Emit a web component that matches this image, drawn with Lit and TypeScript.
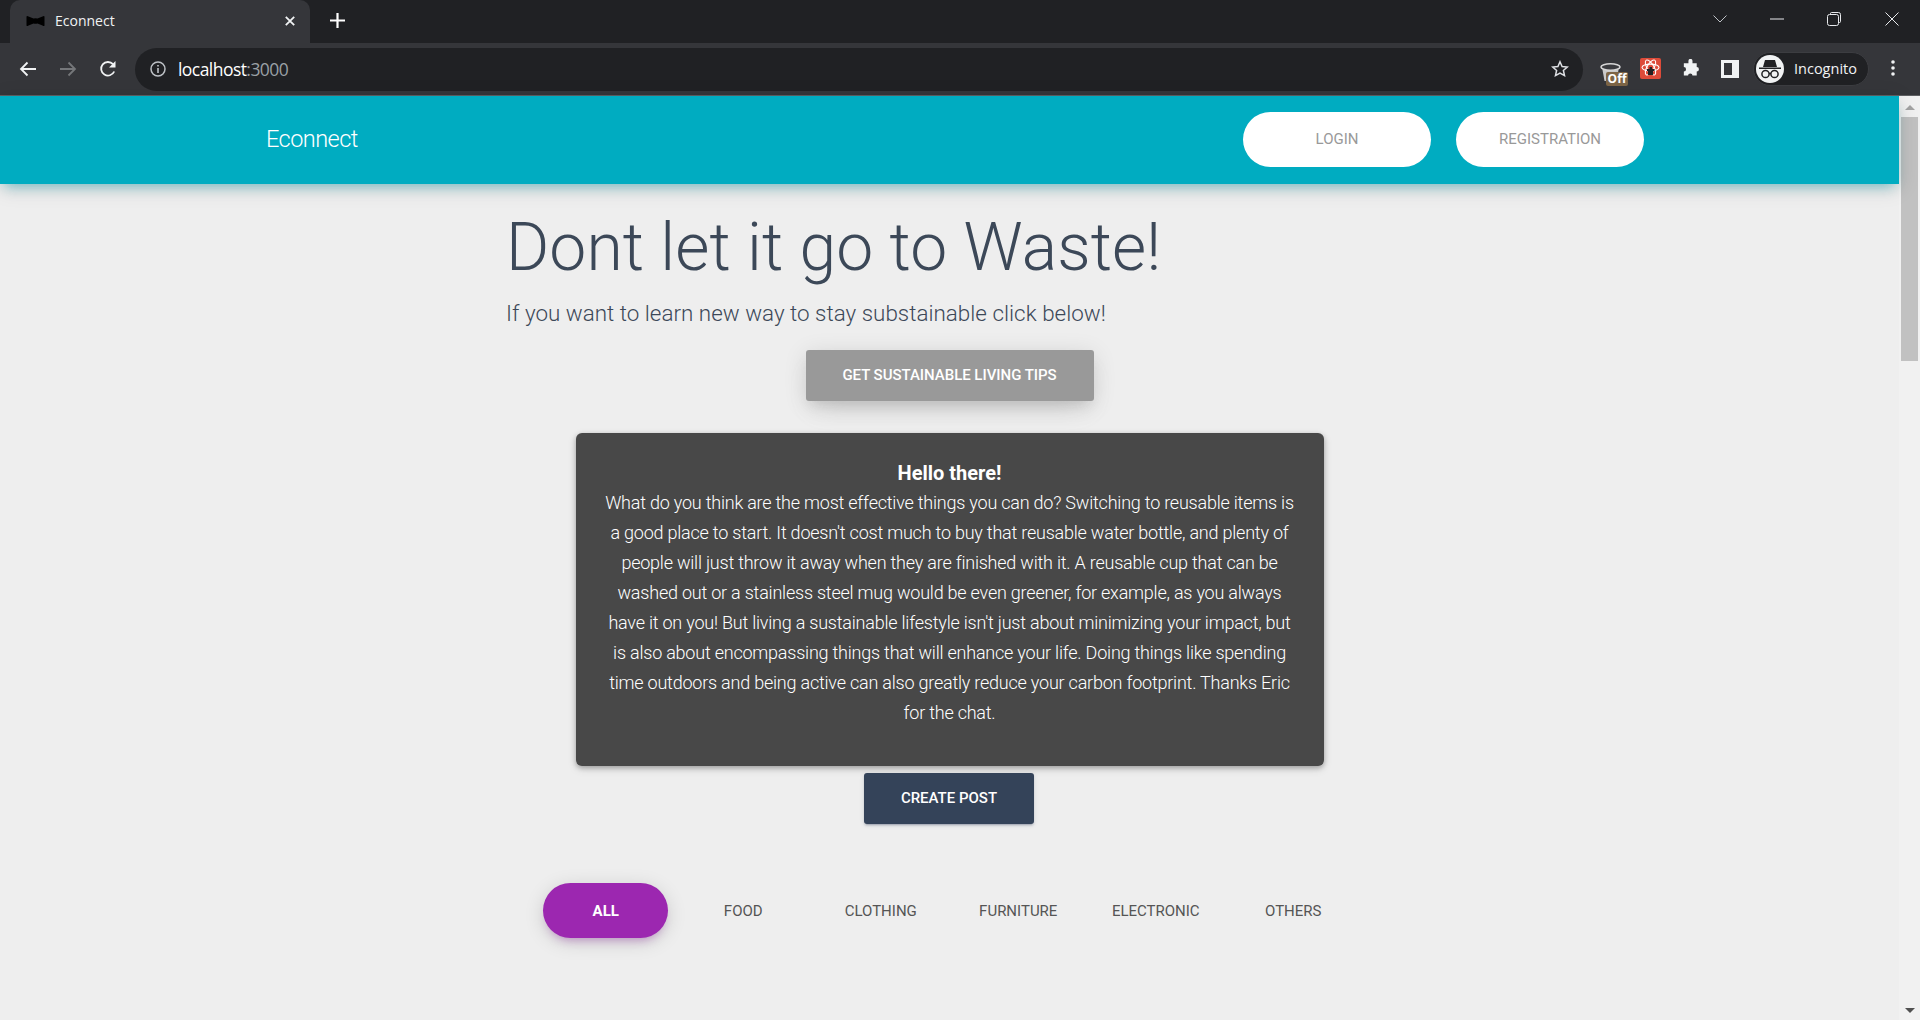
import { LitElement, html, css, svg } from "lit";
import { customElement } from "lit/decorators.js";

const CATS = ["ALL", "FOOD", "CLOTHING", "FURNITURE", "ELECTRONIC", "OTHERS"];

@customElement("app-root")
export class AppRoot extends LitElement {
  static styles = css`
    :host { display: flex; flex-direction: column; width: 1920px; height: 1020px; overflow: hidden; background: #eeeeee; font-family: Roboto, "Liberation Sans", sans-serif; }
    * { box-sizing: border-box; }
    svg { display: block; flex: none; }

    .tabstrip { height: 43px; background: #202124; display: flex; align-items: flex-start; flex: none; }
    .tab { width: 300px; height: 43px; margin: 0 0 0 10px; background: #35363a; border-radius: 10px 10px 0 0; display: flex; align-items: center; padding: 0 15px 2px 16px; color: #f1f3f4; font: 400 14px "Open Sans", Roboto, sans-serif; }
    .tab .title { margin-left: 10px; flex: 1; }
    .newtab { margin: 13px 0 0 20px; }
    .winctl { margin-left: auto; display: flex; align-items: center; height: 37px; gap: 43px; padding-right: 21px; }
    .winctl .last { margin-left: 1px; }

    .toolbar { height: 53px; background: #35363a; border-bottom: 1px solid #5f6063; display: flex; align-items: center; padding: 0 0 0 19px; flex: none; }
    .nav { display: flex; gap: 22px; align-items: center; }
    .omni { margin-left: 18px; width: 1448px; height: 43px; background: #202124; border-radius: 22px; display: flex; align-items: center; padding: 0 14px 0 15px; }
    .url { margin-left: 12px; font: 400 17.5px "Open Sans", Roboto, sans-serif; letter-spacing: -0.55px; color: #fff; }
    .url span { color: #9aa0a6; }
    .star { margin-left: auto; }
    .exts { display: flex; align-items: center; margin-left: 17px; }
    .badge { position: relative; width: 28px; height: 24px; margin-top: 10px; margin-right: 12px; }
    .off { position: absolute; right: 0; bottom: 0; width: 22px; height: 14px; background: #7d6546; color: #fff; font: 700 12px/14px "Open Sans", sans-serif; text-align: center; border-radius: 2px; }
    .it { margin-right: 20px; margin-top: -2px; }
    .puzzle { margin-right: 21px; margin-top: -2px; }
    .sidebar { margin-right: 14px; margin-top: -1px; }
    .inc { display: flex; align-items: center; width: 116px; height: 34px; background: #202124; border: 1px solid #3c3d41; border-radius: 17px; padding-left: 2px; color: #f1f3f4; font: 400 14.5px "Open Sans", sans-serif; margin-top: -1px; }
    .inc .avatar { width: 28px; height: 28px; border-radius: 50%; background: #f1f3f4; display: flex; align-items: center; justify-content: center; margin-right: 10px; }
    .inc .label { margin-top: -1px; }
    .dots { margin-left: 22px; margin-top: -2px; }

    .viewport { flex: 1; display: flex; min-height: 0; }
    .page { flex: 1; min-width: 0; display: flex; flex-direction: column; align-items: stretch; background: #eeeeee; }
    .scrollbar { width: 21px; flex: none; background: #f1f1f1; display: flex; flex-direction: column; align-items: center; }
    .up { margin: 9px 0 7px; width: 0; height: 0; border: 5px solid transparent; border-top: 0; border-bottom: 5px solid #a3a3a3; }
    .thumb { width: 17px; height: 244px; background: #c1c1c1; }
    .down { margin-top: auto; margin-bottom: 7px; width: 0; height: 0; border: 5px solid transparent; border-bottom: 0; border-top: 5px solid #505050; }

    header { height: 88px; background: #00acc1; box-shadow: 0 4px 20px 0 rgba(0,0,0,.14), 0 7px 12px -5px rgba(0,172,193,.46); display: flex; align-items: center; padding: 0 255px 1px 266px; flex: none; position: relative; }
    .brand { color: #fff; font-size: 23.5px; font-weight: 300; letter-spacing: -0.55px; padding-bottom: 2px; }
    .auth { margin-left: auto; display: flex; gap: 25px; }
    .pillbtn { width: 188px; height: 55px; border-radius: 30px; background: #fff; color: #999; display: flex; align-items: center; justify-content: center; padding-bottom: 2px; font-size: 15px; font-weight: 400; }

    main { width: 885px; align-self: center; display: flex; flex-direction: column; padding-top: 29px; }
    h1 { margin: 0 0 0 -1px; font-size: 66px; font-weight: 300; line-height: 70px; color: #3c4858; letter-spacing: 0.1px; }
    h4 { margin: 12px 0 0 -1px; font-size: 22.4px; font-weight: 300; line-height: 36px; color: #3c4858; letter-spacing: 0.02px; }
    .tips { align-self: center; margin-top: 19px; width: 288px; height: 51px; padding-bottom: 2px; background: #999; border-radius: 3px; color: #fff; font-size: 15px; font-weight: 500; letter-spacing: -0.03px; display: flex; align-items: center; justify-content: center; box-shadow: 0 14px 26px -12px rgba(153,153,153,.42), 0 4px 23px 0 rgba(0,0,0,.12), 0 8px 10px -5px rgba(153,153,153,.2); }
    .card { align-self: center; margin-top: 32px; width: 748px; height: 333px; background: #484848; border-radius: 6px; color: #fff; text-align: center; padding: 26px 26px 0; font-size: 18px; font-weight: 300; line-height: 30px; letter-spacing: -0.22px; box-shadow: 0 2px 5px 0 rgba(0,0,0,.26), 0 3px 10px 0 rgba(0,0,0,.12); }
    .card b { display: block; font-weight: 700; font-size: 20px; line-height: 29px; letter-spacing: 0; }
    .create { align-self: center; margin: 7px 1px 0 0; width: 170px; height: 51px; padding-bottom: 2px; background: #344359; border-radius: 3px; color: #fff; font-size: 15px; font-weight: 500; display: flex; align-items: center; justify-content: center; box-shadow: 0 2px 2px 0 rgba(52,67,89,.14), 0 3px 1px -2px rgba(52,67,89,.2), 0 1px 5px 0 rgba(52,67,89,.12); }
    .cats { align-self: center; margin-top: 59px; display: flex; gap: 12.5px; }
    .cat { width: 125px; height: 55px; border-radius: 30px; display: flex; align-items: center; justify-content: center; color: #555; font-size: 15px; font-weight: 400; }
    .cat.on { background: #9c27b0; color: #fff; font-weight: 700; box-shadow: 0 4px 20px 0 rgba(0,0,0,.14), 0 7px 10px -5px rgba(156,39,176,.4); }
  `;

  private icon(w: number, h: number, body: unknown, extra = "") {
    return html`<svg width=${w} height=${h} viewBox="0 0 ${w} ${h}" class=${extra}>${body}</svg>`;
  }

  render() {
    return html`
      <div class="tabstrip">
        <div class="tab">
          ${this.icon(19, 12, svg`<path d="M.5 1.5 Q1 .5 2.5 1.5 L7.5 3.5 Q9.5 3 11.5 3.5 L16.5 1.5 Q18 .5 18.5 1.5 V10.5 Q18 11.5 16.5 10.5 L11.5 8.5 Q9.5 9 7.5 8.5 L2.5 10.5 Q1 11.5 .5 10.5 Z" fill="#000"/>`)}
          <span class="title">Econnect</span>
          ${this.icon(10, 10, svg`<path d="M.8 .8 L9.2 9.2 M9.2 .8 L.8 9.2" stroke="#f1f3f4" stroke-width="1.8"/>`)}
        </div>
        ${this.icon(15, 15, svg`<path d="M7.5 0 V15 M0 7.5 H15" stroke="#fff" stroke-width="2.2"/>`, "newtab")}
        <div class="winctl">
          ${this.icon(14, 8, svg`<path d="M.5 .5 L7 7 L13.5 .5" fill="none" stroke="#bdc1c6" stroke-width="1"/>`)}
          ${this.icon(14, 2, svg`<path d="M0 1 H14" stroke="#e8eaed" stroke-width="1"/>`)}
          ${this.icon(14, 14, svg`<path d="M3.5 2 V1.5 Q3.5 .5 4.5 .5 H11.5 Q13.5 .5 13.5 2.5 V9.5 Q13.5 10.5 12.5 10.5 H12" fill="none" stroke="#e8eaed"/><rect x=".5" y="2.5" width="11" height="11" rx="2" fill="none" stroke="#e8eaed"/>`)}
          ${this.icon(14, 14, svg`<path d="M.5 .5 L13.5 13.5 M13.5 .5 L.5 13.5" stroke="#e8eaed" stroke-width="1"/>`, "last")}
        </div>
      </div>
      <div class="toolbar">
        <div class="nav">
          ${this.icon(18, 16, svg`<path d="M17 8 H2 M8.5 1.5 L2 8 L8.5 14.5" fill="none" stroke="#f1f3f4" stroke-width="1.8"/>`)}
          ${this.icon(18, 16, svg`<path d="M1 8 H16 M9.5 1.5 L16 8 L9.5 14.5" fill="none" stroke="#75777a" stroke-width="1.8"/>`)}
          ${this.icon(18, 18, svg`<path d="M15.2 11.5 A6.8 6.8 0 1 1 14 4.2" fill="none" stroke="#f1f3f4" stroke-width="1.8"/><path d="M16.5 1 V7.5 H10 Z" fill="#f1f3f4"/>`)}
        </div>
        <div class="omni">
          ${this.icon(16, 16, svg`<circle cx="8" cy="8" r="7" fill="none" stroke="#bdc1c6" stroke-width="1.5"/><path d="M8 7 V12 M8 4 V5.6" stroke="#bdc1c6" stroke-width="1.6"/>`)}
          <span class="url">localhost<span>:3000</span></span>
          ${this.icon(18, 18, svg`<path d="M9 1.8 L11.1 6.6 L16.3 7.1 L12.4 10.5 L13.5 15.6 L9 13 L4.5 15.6 L5.6 10.5 L1.7 7.1 L6.9 6.6 Z" fill="none" stroke="#dfe1e5" stroke-width="1.5"/>`, "star")}
        </div>
        <div class="exts">
          <div class="badge">
            ${this.icon(22, 22, svg`<path d="M2 5 L4.5 19 H16.5 L19 5 Z" fill="#c9c9c9"/><ellipse cx="10.5" cy="5" rx="9.5" ry="3.2" fill="#3a3b3f" stroke="#d6d6d6" stroke-width="1.6"/>`)}
            <span class="off">Off</span>
          </div>
          ${this.icon(21, 21, svg`<rect width="21" height="21" rx="2" fill="#dd4b39"/><g fill="none" stroke="#fff" stroke-width="1.1"><ellipse cx="10.5" cy="9.5" rx="8.5" ry="3.4"/><ellipse cx="10.5" cy="9.5" rx="8.5" ry="3.4" transform="rotate(60 10.5 9.5)"/><ellipse cx="10.5" cy="9.5" rx="8.5" ry="3.4" transform="rotate(120 10.5 9.5)"/></g><path d="M9.5 9 H12 V11 H14.5 V13 H13 V17 H8 V13 H7 V11 H9.5 Z" fill="#202124"/>`, "it")}
          ${this.icon(19, 19, svg`<path d="M7 1.5 a2.2 2.2 0 0 1 4.4 0 V4 H16 V8.2 a2.4 2.4 0 0 1 0 4.8 V17.5 H11.4 a2.4 2.4 0 0 0 -4.8 0 H2 V13 a2.4 2.4 0 0 0 0 -4.8 V4 H7 Z" fill="#f1f3f4" transform="translate(1 .5) scale(.92)"/>`, "puzzle")}
          ${this.icon(18, 18, svg`<path d="M0 0 H18 V18 H0 Z M3 3 V15 H11 V3 Z" fill="#f1f3f4" fill-rule="evenodd"/>`, "sidebar")}
          <div class="inc">
            <span class="avatar">
              ${this.icon(24, 22, svg`<path d="M7 2 H17 L19 9 H5 Z M1 9.5 H23 V11 H1 Z" fill="#202124"/><circle cx="7.5" cy="16" r="3.6" fill="none" stroke="#202124" stroke-width="1.5"/><circle cx="16.5" cy="16" r="3.6" fill="none" stroke="#202124" stroke-width="1.5"/><path d="M11 15.5 H13" stroke="#202124" stroke-width="1.5"/>`)}
            </span>
            <span class="label">Incognito</span>
          </div>
          ${this.icon(4, 16, svg`<circle cx="2" cy="2" r="1.8" fill="#f1f3f4"/><circle cx="2" cy="8" r="1.8" fill="#f1f3f4"/><circle cx="2" cy="14" r="1.8" fill="#f1f3f4"/>`, "dots")}
        </div>
      </div>
      <div class="viewport">
        <div class="page">
          <header>
            <span class="brand">Econnect</span>
            <div class="auth">
              <div class="pillbtn">LOGIN</div>
              <div class="pillbtn">REGISTRATION</div>
            </div>
          </header>
          <main>
            <h1>Dont let it go to Waste!</h1>
            <h4>If you want to learn new way to stay substainable click below!</h4>
            <div class="tips">GET SUSTAINABLE LIVING TIPS</div>
            <div class="card">
              <b>Hello there!</b>
              What do you think are the most effective things you can do? Switching to reusable items is a good place to start. It doesn't cost much to buy that reusable water bottle, and plenty of people will just throw it away when they are finished with it. A reusable cup that can be washed out or a stainless steel mug would be even greener, for example, as you always have it on you! But living a sustainable lifestyle isn't just about minimizing your impact, but is also about encompassing things that will enhance your life. Doing things like spending time outdoors and being active can also greatly reduce your carbon footprint. Thanks Eric for the chat.
            </div>
            <div class="create">CREATE POST</div>
            <div class="cats">
              ${CATS.map((c, i) => html`<div class="cat ${i === 0 ? "on" : ""}">${c}</div>`)}
            </div>
          </main>
        </div>
        <div class="scrollbar">
          <div class="up"></div>
          <div class="thumb"></div>
          <div class="down"></div>
        </div>
      </div>
    `;
  }
}
